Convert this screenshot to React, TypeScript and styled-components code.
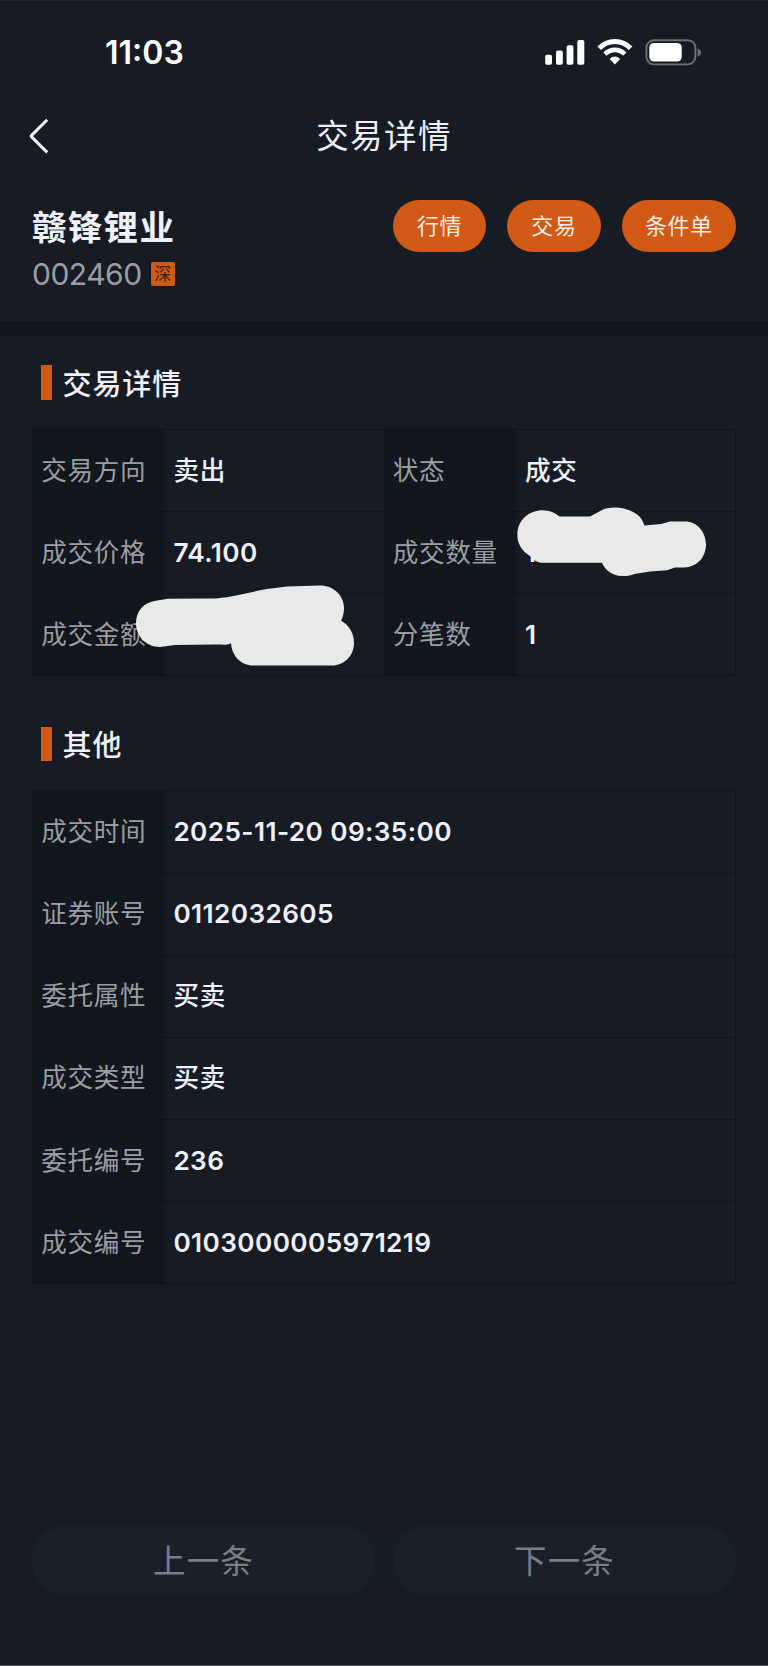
import React from 'react';
import styled, { createGlobalStyle } from 'styled-components';

interface IField {
	label: string;
	value: string;
}

const stockActions = ['行情', '交易', '条件单'];

const tradeFields: IField[] = [
	{ label: '交易方向', value: '卖出' },
	{ label: '状态', value: '成交' },
	{ label: '成交价格', value: '74.100' },
	{ label: '成交数量', value: '1' },
	{ label: '成交金额', value: '' },
	{ label: '分笔数', value: '1' },
];

const otherFields: IField[] = [
	{ label: '成交时间', value: '2025-11-20 09:35:00' },
	{ label: '证券账号', value: '0112032605' },
	{ label: '委托属性', value: '买卖' },
	{ label: '成交类型', value: '买卖' },
	{ label: '委托编号', value: '236' },
	{ label: '成交编号', value: '0103000005971219' },
];

function StatusIcons() {
	return (
		<svg width="158" height="30" viewBox="0 0 158 30">
			<g fill="#ffffff">
				<rect x="1.2" y="17.8" width="6.8" height="10" rx="1.8" />
				<rect x="12" y="13.6" width="6.8" height="14.2" rx="1.8" />
				<rect x="22.6" y="8.2" width="6.8" height="19.6" rx="1.8" />
				<rect x="33.3" y="3" width="7" height="24.8" rx="1.8" />
			</g>
			<g fill="none" stroke="#ffffff" strokeWidth="5">
				<path d="M55.2 11.2 A21.5 21.5 0 0 1 86.6 11.2" />
				<path d="M61 17.2 A13.6 13.6 0 0 1 80.8 17.2" strokeWidth="4.6" />
			</g>
			<path d="M70.9 27.6 L65.6 22 Q70.9 17.2 76.2 22 Z" fill="#ffffff" />
			<rect x="102.4" y="3.2" width="49" height="24.2" rx="7.6" fill="none" stroke="#6c6f77" strokeWidth="1.9" />
			<rect x="105.3" y="6" width="32.4" height="18.6" rx="4.6" fill="#ffffff" />
			<path d="M153.6 11.4 Q157 12.4 157 15.5 Q157 18.6 153.6 19.6 Z" fill="#6c6f77" />
		</svg>
	);
}

function FieldTable({ fields, columns }: { fields: IField[]; columns: number }) {
	return (
		<Table $columns={columns}>
			{fields.map((field) => (
				<Field key={field.label}>
					<FieldLabel>{field.label}</FieldLabel>
					<FieldValue $numeric={/^\d/.test(field.value)}>{field.value}</FieldValue>
				</Field>
			))}
		</Table>
	);
}

function App() {
	return (
		<Screen>
			<GlobalStyle />
			<StatusBar>
				<Clock>11:03</Clock>
				<StatusIcons />
			</StatusBar>
			<NavBar>
				<BackButton aria-label="返回">
					<svg width="20" height="36" viewBox="0 0 20 36" fill="none" stroke="#eef0fa" strokeWidth="3" strokeLinejoin="round">
						<path d="M18.2 1.8 L2.4 17.6 Q1.9 18.1 2.4 18.6 L18.2 34.4" />
					</svg>
				</BackButton>
				<NavTitle>交易详情</NavTitle>
			</NavBar>
			<StockHeader>
				<div>
					<StockName>赣锋锂业</StockName>
					<StockCode>
						<span>002460</span>
						<MarketBadge>深</MarketBadge>
					</StockCode>
				</div>
				<Actions>
					{stockActions.map((action) => (
						<ActionButton key={action}>{action}</ActionButton>
					))}
				</Actions>
			</StockHeader>
			<Divider />
			<Section>
				<SectionTitle><span>交易详情</span></SectionTitle>
				<FieldTable fields={tradeFields} columns={2} />
				<Redaction width="704" height="247" viewBox="32 429 704 247">
					<path d="M136 623 C136 611 144 602 157 600.5 L168 598.8 L210 598.6 C230 598 240 594 267 589 L287 586.4 L320 585.5 C334 585.5 344 596 344 608 C344 613 343 617 341 620.8 C349 625 354 633 354 643 C354 656 344 665.5 332 665.5 L253 665.5 C241 665.5 232 656 231 643.2 Q226 645.4 222 644.4 L214 644.6 L175 645 L160 647 C146 647 136 636 136 623 Z" />
					<path d="M517.4 535 C517.4 520 529 510.3 543 510.3 Q552 510.3 559.5 516.4 L590 516.4 L604 509 Q609 507.2 616 507.5 C631 508.5 642 515 644.3 525.6 L661 524 L670 521.4 L685 521.4 C697 521.4 706 532 706 544.5 C706 557 697 567.4 684 567.4 L675 567.6 L667 570.2 L650 571.6 L634 574 Q630 576.2 622 576 C613 575.6 605 570.5 602 562.7 L541 562.7 Q535 562 530 556 C522 551 517.4 544 517.4 535 Z" />
				</Redaction>
			</Section>
			<Section>
				<SectionTitle><span>其他</span></SectionTitle>
				<FieldTable fields={otherFields} columns={1} />
			</Section>
			<Pager>
				<PagerButton>上一条</PagerButton>
				<PagerButton>下一条</PagerButton>
			</Pager>
		</Screen>
	);
}

export default App;

const GlobalStyle = createGlobalStyle`
	* {
		box-sizing: border-box;
	}

	body {
		margin: 0;
		background-color: #171b23;
	}

	button {
		margin: 0;
		padding: 0;
		border: none;
		background: none;
		font: inherit;
		letter-spacing: inherit;
	}
`;

const Screen = styled.div`
	display: flex;
	flex-direction: column;
	width: 768px;
	height: 1666px;
	overflow: hidden;
	border-top: 1px solid #23272f;
	border-bottom: 1px solid #55585e;
	background-color: #171b23;
	color: #eef0fa;
	font-family: Inter, "Noto Sans CJK SC", sans-serif;
`;

const StatusBar = styled.div`
	display: flex;
	align-items: center;
	justify-content: space-between;
	height: 101px;
	padding: 0 66px 0 105px;
`;

const Clock = styled.div`
	padding-top: 2px;
	color: #ffffff;
	font-size: 32px;
	font-weight: 600;
	line-height: 40px;
`;

const NavBar = styled.div`
	display: grid;
	grid-template-columns: 80px 1fr 80px;
	align-items: center;
	height: 68px;
`;

const BackButton = styled.button`
	display: flex;
	padding-left: 28.5px;
`;

const NavTitle = styled.div`
	padding-top: 2px;
	font-size: 32.5px;
	letter-spacing: 1.4px;
	line-height: 48px;
	text-align: center;
`;

const StockHeader = styled.div`
	display: flex;
	justify-content: space-between;
	height: 151px;
	padding: 30px 32px 0;
`;

const StockName = styled.div`
	height: 54px;
	font-size: 34.5px;
	font-weight: 700;
	letter-spacing: 1.3px;
	line-height: 55px;
`;

const StockCode = styled.div`
	display: flex;
	align-items: center;
	gap: 9px;
	height: 40px;
	color: #9b9da4;
	font-size: 30px;
	letter-spacing: -0.5px;
`;

const MarketBadge = styled.span`
	width: 24px;
	height: 24px;
	border-radius: 2px;
	background-color: #d05a16;
	color: #3a2419;
	font-size: 17px;
	line-height: 25px;
	text-align: center;
`;

const Actions = styled.div`
	display: flex;
	gap: 21px;
`;

const ActionButton = styled.button`
	min-width: 93.4px;
	height: 52px;
	padding: 0 23.3px;
	border-radius: 26px;
	background-color: #d05a16;
	color: #fdeee4;
	font-size: 22px;
	letter-spacing: 0.6px;
	line-height: 52px;
`;

const Divider = styled.div`
	height: 15px;
	background-color: #12161c;
`;

const Section = styled.section`
	position: relative;
	padding: 0 32px;
`;

const SectionTitle = styled.h2`
	display: flex;
	align-items: center;
	gap: 10.5px;
	height: 93px;
	margin: 0;
	padding-left: 8.5px;
	font-size: 29px;
	font-weight: 500;
	letter-spacing: 0.9px;

	&::before {
		content: "";
		width: 11.5px;
		height: 34.5px;
		background-color: #d05a16;
	}

	span {
		padding-bottom: 2px;
	}

	${Section} + ${Section} & {
		height: 114px;
		padding-top: 21px;
	}
`;

const Table = styled.div<{ $columns: number }>`
	display: grid;
	grid-template-columns: repeat(${(props) => props.$columns}, 1fr);
	grid-auto-rows: 82.15px;
	border: 1px solid #10141a;
	border-width: 1px 1px 0 0;
`;

const Field = styled.div`
	display: grid;
	grid-template-columns: 132px 1fr;
	border-bottom: 1px solid #10141a;
	font-size: 25.6px;
	letter-spacing: 0.7px;
	line-height: 36px;
`;

const FieldLabel = styled.div`
	display: flex;
	align-items: center;
	padding-left: 9.2px;
	background-color: #12161d;
	color: #9b9da3;
	white-space: nowrap;
`;

const FieldValue = styled.div<{ $numeric: boolean }>`
	display: flex;
	align-items: center;
	padding-left: 9.4px;
	font-size: ${(props) => (props.$numeric ? '26.2px' : 'inherit')};
	font-weight: ${(props) => (props.$numeric ? 600 : 500)};
	letter-spacing: ${(props) => (props.$numeric ? '0.4px' : 'inherit')};
`;

// hand-drawn strokes that hide the private amounts
const Redaction = styled.svg`
	position: absolute;
	left: 32px;
	bottom: 0;
	fill: #e9e9e9;
`;

const Pager = styled.div`
	display: grid;
	grid-template-columns: 1fr 1fr;
	gap: 18px;
	margin-top: auto;
	padding: 0 32px 69px;
`;

const PagerButton = styled.button`
	height: 71px;
	border-radius: 36px;
	background-color: #1a2029;
	color: #7c7e85;
	font-size: 32.5px;
	letter-spacing: 1.2px;
	line-height: 73px;
`;
